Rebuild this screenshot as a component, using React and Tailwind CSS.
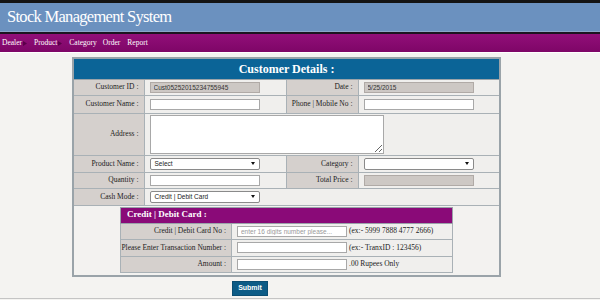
const LBL = "bg-[#d5d0cd] border border-[#a9b1b6] text-right pr-[5px] text-[7.5px] text-[#222] whitespace-nowrap";
const VAL = "bg-[#f0efed] border border-[#a9b1b6] pl-[5px]";
const INP = "block w-[110px] h-[11px] bg-white border border-[#a8a8a8] px-[3px] text-[6.5px] text-[#333] font-['Liberation_Sans',Arial,sans-serif] outline-none";
const RO = "block w-[110px] h-[11px] bg-[#cdc8c4] border border-[#b0aaa6] px-[3px] text-[6.5px] text-[#333] font-['Liberation_Sans',Arial,sans-serif] outline-none";

function Arrow() {
  return (
    <svg width="4" height="5" viewBox="0 0 4 5" className="ml-[1px]">
      <path d="M0 0 L4 2.5 L0 5 Z" fill="#5a0049" />
    </svg>
  );
}

function Select({ text }) {
  return (
    <div className="flex items-center justify-between w-[110px] h-[12px] bg-white border border-[#8a8a8a] rounded-[2px] pl-[4px] pr-[4px] text-[6.5px] text-[#222] font-['Liberation_Sans',Arial,sans-serif]">
      <span>{text}</span>
      <svg width="4" height="3" viewBox="0 0 4 3">
        <path d="M0 0 L4 0 L2 3 Z" fill="#111" />
      </svg>
    </div>
  );
}

export default function App() {
  return (
    <div className="w-[600px] h-[300px] overflow-hidden bg-[#f4f3f1] font-['Liberation_Serif',serif]">
      <div className="h-[3px] bg-[#141414]" />
      <div className="h-[29px] bg-[#6b91bf] flex items-center pl-[7px] text-white text-[16.5px] tracking-[-0.7px] border-b border-[#8aa6c9]">
        Stock Management System
      </div>
      <div className="h-[2px] bg-[#1c1420]" />
      <nav className="h-[18px] bg-gradient-to-b from-[#920f79] to-[#7e0667] flex items-center pl-[2px] text-white text-[7.5px]">
        <span className="flex items-center">Dealer<Arrow /></span>
        <span className="flex items-center ml-[7px]">Product<Arrow /></span>
        <span className="ml-[7px]">Category</span>
        <span className="ml-[6px]">Order</span>
        <span className="ml-[7px]">Report</span>
      </nav>
      <div className="h-[1px] bg-white" />

      <div className="pt-[4px] pl-[72px]">
        <table className="w-[427px] table-fixed border-collapse border-2 border-[#9aa3a9]">
          <colgroup>
            <col className="w-[71px]" />
            <col className="w-[142px]" />
            <col className="w-[72px]" />
            <col className="w-[142px]" />
          </colgroup>
          <tbody>
            <tr className="h-[21px]">
              <th colSpan={4} className="bg-[#0b6497] text-white text-[12px] font-bold text-center border border-[#9aa3a9]">
                Customer Details :
              </th>
            </tr>
            <tr className="h-[16px]">
              <td className={LBL}>Customer ID :</td>
              <td className={VAL}><input readOnly className={RO} value="Cust05252015234755945" /></td>
              <td className={LBL}>Date :</td>
              <td className={VAL}><input readOnly className={RO} value="5/25/2015" /></td>
            </tr>
            <tr className="h-[18px]">
              <td className={LBL}>Customer Name :</td>
              <td className={VAL}><input className={INP} /></td>
              <td className={LBL}>Phone | Mobile No :</td>
              <td className={VAL}><input className={INP} /></td>
            </tr>
            <tr className="h-[42px]">
              <td className={LBL}>Address :</td>
              <td colSpan={3} className={VAL}>
                <textarea className="block w-[234px] h-[39px] bg-white border border-[#a8a8a8] outline-none" />
              </td>
            </tr>
            <tr className="h-[17px]">
              <td className={LBL}>Product Name :</td>
              <td className={VAL}><Select text="Select" /></td>
              <td className={LBL}>Category :</td>
              <td className={VAL}><Select text="" /></td>
            </tr>
            <tr className="h-[16px]">
              <td className={LBL}>Quantity :</td>
              <td className={VAL}><input className={INP} /></td>
              <td className={LBL}>Total Price :</td>
              <td className={VAL}><input readOnly className={RO} /></td>
            </tr>
            <tr className="h-[17px]">
              <td className={LBL}>Cash Mode :</td>
              <td colSpan={3} className={VAL}><Select text="Credit | Debit Card" /></td>
            </tr>
            <tr>
              <td colSpan={4} className="bg-[#f3f2f0] border border-[#a9b1b6] pt-[1px] pb-[2px]">
                <table className="w-[332px] mx-auto table-fixed border-collapse border border-[#9aa3a9]">
                  <colgroup>
                    <col className="w-[111px]" />
                    <col className="w-[221px]" />
                  </colgroup>
                  <tbody>
                    <tr className="h-[16px]">
                      <th colSpan={2} className="bg-[#8a0a78] text-white text-[9px] font-bold text-left pl-[6px] border border-[#9aa3a9]">
                        Credit | Debit Card :
                      </th>
                    </tr>
                    <tr className="h-[16px]">
                      <td className={LBL + " pr-[4px]"}>Credit | Debit Card No :</td>
                      <td className={VAL}>
                        <div className="flex items-center">
                          <input className={INP + " placeholder:text-[#9a9a9a]"} placeholder="enter 16 digits number please..." />
                          <span className="ml-[2px] text-[7.5px] text-[#222]">(ex:- 5999 7888 4777 2666)</span>
                        </div>
                      </td>
                    </tr>
                    <tr className="h-[17px]">
                      <td className={LBL + " pr-[4px]"}>Please Enter Transaction Number :</td>
                      <td className={VAL}>
                        <div className="flex items-center">
                          <input className={INP} />
                          <span className="ml-[2px] text-[7.5px] text-[#222]">(ex:- TranxID : 123456)</span>
                        </div>
                      </td>
                    </tr>
                    <tr className="h-[16px]">
                      <td className={LBL + " pr-[4px]"}>Amount :</td>
                      <td className={VAL}>
                        <div className="flex items-center">
                          <input className={INP} />
                          <span className="ml-[2px] text-[7.5px] text-[#222]">.00 Rupees Only</span>
                        </div>
                      </td>
                    </tr>
                  </tbody>
                </table>
              </td>
            </tr>
          </tbody>
        </table>
      </div>

      <div className="pl-[232px] pt-[4px]">
        <button className="w-[36px] h-[15px] bg-[#0c5b86] text-white text-[7px] font-bold font-['Liberation_Sans',Arial,sans-serif] flex items-center justify-center border border-[#0a4d72]">
          Submit
        </button>
      </div>
      <div className="mt-[2px] h-[1px] bg-[#c4c4c4]" />
    </div>
  );
}
